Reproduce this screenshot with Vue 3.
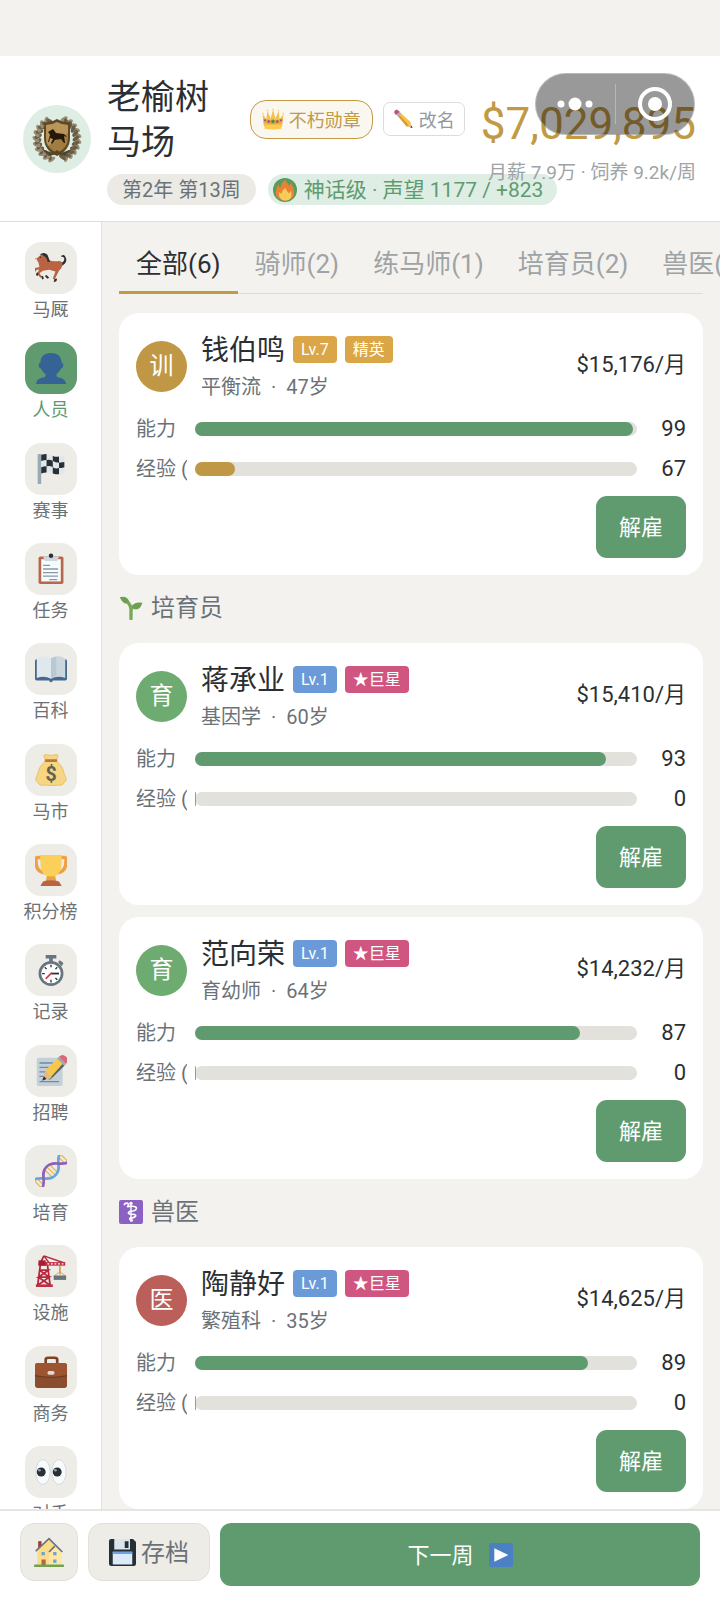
<script setup>
import { ref } from 'vue';

const menus = [
	{ name: '马厩', icon: 'horse' },
	{ name: '人员', icon: 'person' },
	{ name: '赛事', icon: 'flag' },
	{ name: '任务', icon: 'clipboard' },
	{ name: '百科', icon: 'book' },
	{ name: '马市', icon: 'money' },
	{ name: '积分榜', icon: 'trophy' },
	{ name: '记录', icon: 'watch' },
	{ name: '招聘', icon: 'memo' },
	{ name: '培育', icon: 'dna' },
	{ name: '设施', icon: 'crane' },
	{ name: '商务', icon: 'case' },
	{ name: '对手', icon: 'eyes' },
];

const tabs = ['全部(6)', '骑师(2)', '练马师(1)', '培育员(2)', '兽医(1)'];

const groups = [
	{
		staff: [
			{ name: '钱伯鸣', mark: '训', type: 'trainer', level: 7, rank: '精英', rankType: 'elite', skill: '平衡流', age: 47, pay: '$15,176', ability: 99, exp: 67, expRate: 9 },
		],
	},
	{
		title: '培育员',
		icon: 'seedling',
		staff: [
			{ name: '蒋承业', mark: '育', type: 'breeder', level: 1, rank: '★巨星', rankType: 'star', skill: '基因学', age: 60, pay: '$15,410', ability: 93, exp: 0, expRate: 0 },
			{ name: '范向荣', mark: '育', type: 'breeder', level: 1, rank: '★巨星', rankType: 'star', skill: '育幼师', age: 64, pay: '$14,232', ability: 87, exp: 0, expRate: 0 },
		],
	},
	{
		title: '兽医',
		icon: 'medical',
		staff: [
			{ name: '陶静好', mark: '医', type: 'vet', level: 1, rank: '★巨星', rankType: 'star', skill: '繁殖科', age: 35, pay: '$14,625', ability: 89, exp: 0, expRate: 0 },
		],
	},
];

const activeMenu = ref('人员');
const activeTab = ref('全部(6)');

// laurel leaves, left and right of the shield
const leaves = [];
for (let a = 20; a <= 155; a += 15) {
	leaves.push(a, 360 - a);
}
</script>

<template>
	<div class="page">
		<svg class="sprite" aria-hidden="true">
			<symbol id="crown" viewBox="0 0 36 36">
				<path d="M3 30 1 10l6 8 2-13 5 12 4-14 4 14 5-12 2 13 6-8-2 20z" fill="#f4c14d" />
				<path d="M4 29q14-4 28 0v5q-14 2-28 0z" fill="#ffcc4d" />
				<path d="M2 17q16 6 32 0l-1 8q-15 4-30 0z" fill="#e9a83f" />
				<g fill="#ffd873"><circle cx="1.500" cy="9" r="1.500" /><circle cx="9" cy="4" r="1.500" /><circle cx="18" cy="2.500" r="1.500" /><circle cx="27" cy="4" r="1.500" /><circle cx="34.500" cy="9" r="1.500" /></g>
				<circle cx="18" cy="22" r="3" fill="#5c913b" />
				<g fill="#9042b5"><circle cx="11" cy="22" r="2" /><circle cx="25" cy="22" r="2" /><circle cx="5" cy="20" r="1.500" /><circle cx="31" cy="20" r="1.500" /></g>
			</symbol>
			<symbol id="pencil" viewBox="0 0 36 36">
				<path d="M35 34 25 31l6-7z" fill="#e8b98d" /><path d="m35 34-4-1 3-3z" fill="#292f33" />
				<path d="m9 13 5-6 18 17-7 8z" fill="#f6c145" /><path d="m9 13 2-3 17 19-3 3z" fill="#d99e32" />
				<path d="m5 9 6-5 4 4-6 6z" fill="#a9b6be" /><path d="M2 6q0-4 5-5l5 4-7 6z" fill="#c74d7b" />
			</symbol>
			<symbol id="fire" viewBox="0 0 36 36">
				<circle cx="18" cy="18" r="18" fill="#579b63" />
				<path d="M18 3q3 5 7 9 0-3 2-5 5 8 5 15 0 11-14 12Q5 33 4 22 4 16 8 9q1 5 3 6 1-8 7-12z" fill="#e98333" />
				<path d="M19 15q1 5 5 8l3-4q4 14-9 15-10-1-9-13l4 3q0-5 6-9z" fill="#f8cb5c" />
			</symbol>
			<symbol id="horse" viewBox="0 0 36 36">
				<path d="M27 13q6-1 6-5 0-3-4-3 3-3 5 0 4 7-5 11z" fill="#292f33" />
				<path d="M1 8 7 3l3-1q4 2 5 7 6 2 12 1 4 0 4 5-1 4-4 6l-3 6-2 4-2-1 3-8-7-2-7 1-4 3 3 4-2 1-4-5 3-4-3 0-4 5-2-1 4-6 5-1-1-5-3-5-4 2z" fill="#b96343" />
				<path d="M5 3Q10-1 14 3l3 8-3 0q0-5-6-8z" fill="#292f33" />
				<path d="m2 23-1 3 2 1 1-3zM7 27l1 4 2-1-1-3zM11 27l3 3 2-1-3-3zM22 30l-1 4 3-1 1-3z" fill="#292f33" />
				<circle cx="6" cy="6" r=".8" fill="#292f33" />
			</symbol>
			<symbol id="person" viewBox="0 0 36 36">
				<path d="M18 1q12 0 12 12 0 8-6 12 0 4 4 4 6 1 7 7H1q1-6 7-7 4 0 4-4-6-4-6-12Q6 1 18 1z" fill="#366395" />
				<path d="M6 12q-3 0-1 6l3 1zM30 12q3 0 1 6l-3 1z" fill="#366395" />
			</symbol>
			<symbol id="flag" viewBox="0 0 36 36">
				<rect x="3" y="1" width="4" height="34" rx="1" fill="#99aab5" />
				<path d="M7 2q7-2 13 1t13 0v20q-7 3-13 0t-13 0z" fill="#dfe7ec" />
				<path d="M7 2q3-1 6-1v7q-3 0-6 1zM20 3q3 2 7 1v7q-4 0-7-2zM13 8q4-1 7 1v7q-3-2-7-1zM27 11l6-1v6q-3 1-6 1zM7 16q3-1 6-1v7q-3 0-6 1zM20 16q3 2 7 1v7q-4 0-7-1z" fill="#292f33" />
			</symbol>
			<symbol id="clipboard" viewBox="0 0 36 36">
				<rect x="4" y="4" width="28" height="31" rx="2" fill="#b8674d" /><rect x="7" y="7" width="22" height="25" fill="#f8fbfc" />
				<path d="M9 4h6q0-3 3-3t3 3h6l-2 5H11z" fill="#ccd6dd" /><circle cx="18" cy="3" r="2.500" fill="#292f33" />
				<path d="M9 14h8M9 18h17M9 22h17M9 26h17M16 30h9" stroke="#8799a7" stroke-width="1.500" />
			</symbol>
			<symbol id="book" viewBox="0 0 36 36">
				<path d="M0 9q0-2 2-2h32q2 0 2 2v20q0 2-2 2H20q0 2-2 2t-2-2H2q-2 0-2-2z" fill="#43698f" />
				<path d="M4 5q8-3 14 1v23q-7-4-16-1V7z" fill="#e1e8ed" /><path d="M18 6q7-4 14-1l2 2v21q-9-3-16 1z" fill="#ccd6dd" />
				<path d="M18 6l6-2v21l-6 4z" fill="#b9c8d6" />
			</symbol>
			<symbol id="money" viewBox="0 0 36 36">
				<path d="M12 8 10 2q0-2 4-1 4 1 8 0 4-1 4 1l-2 6q8 6 9 15 4 6 0 9-2 4-7 3-8 1-16 0-5 1-7-3-4-3 0-9 1-9 9-15z" fill="#f6d583" stroke="#e8bd5a" />
				<rect x="11" y="6" width="14" height="3" rx="1" fill="#bc7540" />
				<text x="18" y="30" text-anchor="middle" font-size="22" font-weight="700" fill="#67624f">$</text>
			</symbol>
			<symbol id="trophy" viewBox="0 0 36 36">
				<path d="M8 4H3Q1 4 1 7q0 13 9 14M28 4h5q2 0 2 3 0 13-9 14" fill="none" stroke="#eda143" stroke-width="4" />
				<path d="M14 22h8l2 9H12z" fill="#eaa343" /><path d="M6 1h24v7q0 14-7 17H13Q6 22 6 8z" fill="#fbd05a" />
				<path d="M9 31q9-3 18 0l3 5H6z" fill="#b96345" />
			</symbol>
			<symbol id="watch" viewBox="0 0 36 36">
				<path d="M12 1h12v4H12zM16 5h4v4h-4zM26 9l2-2 4 3-2 4z" fill="#66757f" />
				<circle cx="18" cy="22" r="14" fill="#66757f" /><circle cx="18" cy="22" r="11" fill="#fff" />
				<path d="M18 12v3M18 29v3M8 22h3M11 15l2 2M25 15l-2 2M25 29l-2-2" stroke="#292f33" stroke-width="1.500" />
				<path d="M18 22h9" stroke="#292f33" stroke-width="2" /><path d="m19 21-7 7" stroke="#d83b4a" stroke-width="2" />
			</symbol>
			<symbol id="memo" viewBox="0 0 36 36">
				<rect x="2" y="3" width="29" height="32" rx="2" fill="#c3d0da" />
				<path d="M5 9h18M5 14h14M5 19h11M5 24h6M5 30h22" stroke="#708ba5" stroke-width="1.500" />
				<path d="m9 27 3-10L25 4l8 8-15 15z" fill="#f6c64d" /><path d="m15 28 3-1 15-15-2-2z" fill="#55636b" />
				<path d="m8 28 4-10 7 8z" fill="#e3b88d" /><path d="m8 29 2-5 3 3z" fill="#292f33" />
				<path d="m25 4 2-2 8 8-2 2z" fill="#99aab5" /><path d="m27 2q4-4 8 0 3 3 0 8z" fill="#df6577" />
			</symbol>
			<symbol id="dna" viewBox="0 0 36 36">
				<g transform="rotate(-45 18 18)" fill="none">
					<path d="M-3 12v12M1 14v8M14 12v12M18 11v14M22 12v12M35 14v8M39 12v12" stroke="#e7ba58" stroke-width="1.500" />
					<path d="M-5 11C6 11 6 25 18 25S30 11 41 11" stroke="#68a6df" stroke-width="3" />
					<path d="M-5 25C6 25 6 11 18 11S30 25 41 25" stroke="#8d62b6" stroke-width="3" />
				</g>
			</symbol>
			<symbol id="crane" viewBox="0 0 36 36">
				<path d="M6 11 3 34M14 11l3 23M5 17h10L4 25h12L3 34M5 17l11 8M4 25l13 9M10 1 5 11" fill="none" stroke="#b6273e" stroke-width="2" />
				<path d="m10 1 23 8M10 1l6 8" stroke="#b6273e" stroke-width="1.500" /><path d="M4 8h30v4H4z" fill="#be3145" />
				<path d="M14 10h18" stroke="#fff" stroke-width="1.500" stroke-dasharray="2 2" />
				<rect x="4" y="6" width="8" height="6" fill="#a81e37" /><path d="M1 33h19v3H1z" fill="#be3145" />
				<path d="M28 12v10" fill="none" stroke="#d9a14b" stroke-width="2" /><path d="m22 23 6-4 6 4" fill="none" stroke="#d9a14b" /><rect x="21" y="23" width="14" height="5" fill="#66757f" />
			</symbol>
			<symbol id="case" viewBox="0 0 36 36">
				<path d="M12 9V4q0-2 3-2h7q3 0 3 2v5" fill="none" stroke="#7f4325" stroke-width="3" />
				<rect y="8" width="36" height="28" rx="3" fill="#8a4d2e" /><path d="M0 11q0-3 3-3h30q3 0 3 3v11q-18 4-36 0z" fill="#9c5530" />
				<path d="M0 22q18 4 36 0" fill="none" stroke="#65351f" /><rect x="14" y="17" width="8" height="4" rx="2" fill="#e3dbd3" />
			</symbol>
			<symbol id="eyes" viewBox="0 0 36 36">
				<ellipse cx="9" cy="18" rx="8" ry="14" fill="#f8fbfd" stroke="#cfd7dc" /><ellipse cx="27" cy="18" rx="8" ry="14" fill="#f8fbfd" stroke="#cfd7dc" />
				<circle cx="7" cy="18" r="5" fill="#292f33" /><circle cx="25" cy="18" r="5" fill="#292f33" />
				<circle cx="5" cy="16" r="1.500" fill="#91a3ae" /><circle cx="23" cy="16" r="1.500" fill="#91a3ae" />
			</symbol>
			<symbol id="seedling" viewBox="0 0 36 36">
				<path d="M18 34V20Q17 9 6 5M18 21q1-5 9-8" fill="none" stroke="#77a957" stroke-width="5" stroke-linecap="round" />
				<path d="M1 2Q12-1 15 8q-1 4-7 3Q4 8 1 2zM35 10q-3 11-11 10-4-1-4-4 3-8 15-6z" fill="#6da052" />
			</symbol>
			<symbol id="medical" viewBox="0 0 36 36">
				<rect width="36" height="36" rx="3" fill="#8b62c4" />
				<path d="M18 7v26" stroke="#fff" stroke-width="2" /><circle cx="18" cy="5" r="2.500" fill="#fff" />
				<path d="M8 8q0-4 5-3 3 3-1 5 15-2 14 3-1 4-10 4-4 3 0 4 10 0 9 3-2 3-8 3-3 2 4 4" fill="none" stroke="#fff" stroke-width="2.500" />
			</symbol>
			<symbol id="house" viewBox="0 0 36 36">
				<path d="M5 5h4v9H5z" fill="#9a3b3f" /><path d="M4 15 18 2l14 13v18H4z" fill="#fbdc8b" /><path d="m18 18 7-7 8 8v14H18z" fill="#ffe7a5" />
				<path d="M2 17 18 2l16 16M18 18l7-7" fill="none" stroke="#66757f" stroke-width="2" />
				<g fill="#70a3d3"><rect x="9" y="18" width="4" height="4" /><rect x="23" y="18" width="4" height="4" /><rect x="23" y="27" width="4" height="4" /></g>
				<rect x="9" y="27" width="5" height="7" fill="#b66347" /><rect y="33" width="36" height="3" rx="1" fill="#72a14f" />
			</symbol>
			<symbol id="floppy" viewBox="0 0 36 36">
				<path d="M3 0h29l4 4v29q0 3-3 3H3q-3 0-3-3V3q0-3 3-3z" fill="#252f37" />
				<path d="M7 0h21v14H7z" fill="#dbe4eb" /><rect x="21" y="3" width="5" height="9" fill="#252f37" />
				<path d="M5 17h26v17H5z" fill="#dce9f6" /><path d="M5 17h26v3H5z" fill="#6da2e3" />
			</symbol>
			<symbol id="play" viewBox="0 0 36 36">
				<rect width="36" height="36" rx="3" fill="#4b80c5" /><path d="m8 8 21 10L8 28z" fill="#fff" />
			</symbol>
		</svg>

		<header class="header">
			<div class="stable-logo">
				<svg viewBox="0 0 50 50" role="img" aria-label="马场徽章">
					<g v-for="a in leaves" :key="a" :transform="`rotate(${a + 180} 25 25)`">
						<ellipse cx="23" cy="4" rx="2" ry="4" fill="#9a8e74" transform="rotate(35 23 4)" />
						<ellipse cx="26" cy="6" rx="2" ry="4" fill="#6b5e46" transform="rotate(-35 26 6)" />
					</g>
					<path d="M25 5q6 4 13 3v16q0 12-13 18Q12 36 12 24V8q7 1 13-3z" fill="#5f4825" />
					<path d="M25 8q5 3 11 3v13q0 10-11 15Q14 34 14 24V11q6 0 11-3z" fill="#a07c40" />
					<path d="M25 8q5 3 11 3v8L16 32q-2-3-2-8V11q6 0 11-3z" fill="#d0b071" opacity=".5" />
					<path d="m16 18 5-3 3 4 8 1 3 3-3-1 1 7h-1l-3-4-6 1-3 4-1-1 2-4-3-1-1 4h-1l2-7-1-2z" fill="#251709" />
					<path d="m10 35 11 4 4-3 4 3 11-4-7 7-8-2-8 2z" fill="#54452d" />
				</svg>
			</div>
			<div class="stable-info">
				<div class="stable-row">
					<h1 class="stable-name">老榆树马场</h1>
					<button type="button" class="medal"><svg class="icon-22"><use href="#crown" /></svg>不朽勋章</button>
					<button type="button" class="rename"><svg class="icon-20"><use href="#pencil" /></svg>改名</button>
				</div>
				<div class="stable-tags">
					<span class="tag">第2年 第13周</span>
					<span class="tag tag-fame"><svg class="icon-24"><use href="#fire" /></svg>神话级 · 声望 1177 / +823</span>
				</div>
			</div>
			<div class="finance">
				<div class="money">$7,029,895</div>
				<div class="cost">月薪 7.9万 · 饲养 9.2k/周</div>
			</div>
			<div class="capsule">
				<button type="button" aria-label="更多">
					<svg width="36" height="16" viewBox="0 0 36 16" fill="#fff"><circle cx="4" cy="8" r="3.500" /><circle cx="18" cy="8" r="6.500" /><circle cx="32" cy="8" r="3.500" /></svg>
				</button>
				<i></i>
				<button type="button" aria-label="关闭">
					<svg width="36" height="36" viewBox="0 0 36 36"><circle cx="18" cy="18" r="15" fill="none" stroke="#fff" stroke-width="4" /><circle cx="18" cy="18" r="7" fill="#fff" /></svg>
				</button>
			</div>
		</header>

		<div class="body">
			<nav class="sidebar">
				<button
					v-for="menu in menus"
					:key="menu.name"
					type="button"
					class="menu"
					:class="{ active: activeMenu === menu.name }"
					@click="activeMenu = menu.name"
				>
					<span class="menu-icon"><svg class="icon-32"><use :href="'#' + menu.icon" /></svg></span>
					<span class="menu-name">{{ menu.name }}</span>
				</button>
			</nav>

			<main class="content">
				<div class="tabs">
					<button
						v-for="tab in tabs"
						:key="tab"
						type="button"
						class="tab"
						:class="{ active: activeTab === tab }"
						@click="activeTab = tab"
					>{{ tab }}</button>
				</div>

				<section v-for="(group, index) in groups" :key="index" class="group">
					<h2 v-if="group.title" class="group-title"><svg class="icon-24"><use :href="'#' + group.icon" /></svg>{{ group.title }}</h2>
					<article v-for="item in group.staff" :key="item.name" class="card">
						<div class="card-head">
							<div class="avatar" :class="item.type">{{ item.mark }}</div>
							<div class="who">
								<div class="who-row">
									<h3 class="who-name">{{ item.name }}</h3>
									<span class="badge" :class="{ elite: item.level > 5 }">Lv.{{ item.level }}</span>
									<span class="badge" :class="item.rankType">{{ item.rank }}</span>
								</div>
								<div class="who-info">
									<span>{{ item.skill }}</span>
									<span>·</span>
									<span>{{ item.age }}岁</span>
								</div>
							</div>
							<div class="pay">{{ item.pay }}/月</div>
						</div>
						<div class="stats">
							<div class="stat">
								<span class="stat-label">能力</span>
								<div class="track"><div class="fill" :style="{ width: item.ability + '%' }"></div></div>
								<span class="stat-value">{{ item.ability }}</span>
							</div>
							<div class="stat">
								<span class="stat-label">经验 (</span>
								<div class="track"><div class="fill exp" :style="{ width: item.expRate + '%' }"></div></div>
								<span class="stat-value">{{ item.exp }}</span>
							</div>
						</div>
						<button type="button" class="fire">解雇</button>
					</article>
				</section>
			</main>
		</div>

		<footer class="footer">
			<button type="button" class="tool home" aria-label="主页"><svg class="icon-30"><use href="#house" /></svg></button>
			<button type="button" class="tool save"><svg class="icon-27"><use href="#floppy" /></svg><span>存档</span></button>
			<button type="button" class="next"><span>下一周</span><svg class="icon-24"><use href="#play" /></svg></button>
		</footer>
	</div>
</template>

<style>
body {
	margin: 0;
	background: #f4f2ee;
}
</style>

<style scoped>
.page {
	display: flex;
	flex-direction: column;
	box-sizing: border-box;
	height: 100vh;
	padding-top: 56px;
	overflow: hidden;
	background: #f4f2ee;
	color: #2b2f33;
	font-family: Roboto, "Noto Sans CJK SC", sans-serif;
}

.page * {
	box-sizing: border-box;
}

.sprite {
	display: none;
}

button {
	margin: 0;
	padding: 0;
	border: 0;
	background: none;
	color: inherit;
	font: inherit;
	cursor: pointer;
}

h1,
h2,
h3 {
	margin: 0;
	font-weight: 400;
}

.icon-20,
.icon-22,
.icon-24,
.icon-27,
.icon-30,
.icon-32 {
	flex: none;
	display: block;
}

.icon-20 {
	width: 20px;
	height: 20px;
}

.icon-22 {
	width: 22px;
	height: 22px;
}

.icon-24 {
	width: 24px;
	height: 24px;
}

.icon-27 {
	width: 27px;
	height: 27px;
}

.icon-30 {
	width: 30px;
	height: 30px;
}

.icon-32 {
	width: 32px;
	height: 32px;
}

.header {
	position: relative;
	display: flex;
	align-items: center;
	gap: 16px;
	flex: none;
	padding: 17px 24px 16px 23px;
	border-bottom: 1px solid #dfdeda;
	background: #fff;
}

.stable-logo {
	display: flex;
	align-items: center;
	justify-content: center;
	flex: none;
	width: 68px;
	height: 68px;
	border-radius: 50%;
	background: #deeee5;
}

.stable-logo svg {
	width: 50px;
	height: 50px;
}

.stable-info {
	flex: 1;
	min-width: 0;
}

.stable-row {
	display: flex;
	align-items: center;
	gap: 10px;
}

.stable-name {
	flex: 1;
	padding-top: 2px;
	font-size: 34px;
	line-height: 45px;
}

.medal,
.rename {
	display: flex;
	align-items: center;
	flex: none;
	font-size: 18px;
	white-space: nowrap;
}

.medal {
	gap: 5px;
	height: 39px;
	padding: 0 11px;
	border: 1px solid #c09a45;
	border-radius: 16px;
	background: #faf7f0;
	color: #c09a45;
}

.rename {
	gap: 6px;
	height: 34px;
	padding: 0 9px;
	border: 1px solid #dddcd9;
	border-radius: 7px;
	color: #93989b;
}

.stable-tags {
	display: flex;
	gap: 12px;
	margin-top: 9px;
}

.tag {
	display: flex;
	align-items: center;
	flex: none;
	height: 31px;
	padding: 0 15px;
	border-radius: 16px;
	background: #eceae5;
	color: #6b7277;
	font-size: 20px;
	line-height: 30px;
	white-space: nowrap;
}

.tag-fame {
	gap: 7px;
	padding: 0 14px 0 5px;
	background: #deeee5;
	color: #609b6f;
	font-size: 21px;
}

.finance {
	position: relative;
	flex: none;
	text-align: right;
}

.money {
	color: #c09a45;
	font-size: 44px;
	line-height: 58px;
}

.cost {
	margin-top: 8px;
	color: #9ea3a5;
	font-size: 19px;
	line-height: 23px;
}

.capsule {
	position: absolute;
	top: 17px;
	right: 25px;
	display: flex;
	align-items: center;
	width: 160px;
	height: 62px;
	border: 1px solid rgba(255, 255, 255, 0.3);
	border-radius: 31px;
	background: rgba(0, 0, 0, 0.4);
}

.capsule button {
	display: flex;
	align-items: center;
	justify-content: center;
	flex: 1;
	height: 100%;
}

.capsule i {
	width: 1px;
	height: 40px;
	background: rgba(255, 255, 255, 0.3);
}

.body {
	display: flex;
	flex: 1;
	min-height: 0;
}

.sidebar {
	display: flex;
	flex-direction: column;
	flex: none;
	width: 102px;
	padding-top: 20px;
	overflow-y: auto;
	scrollbar-width: none;
	border-right: 1px solid #e4e2dd;
	background: #fff;
}

.menu {
	display: flex;
	flex-direction: column;
	align-items: center;
	justify-content: flex-start;
	gap: 4px;
	flex: 0 0 7.92%;
	color: #6b7277;
	font-size: 18px;
	line-height: 24px;
}

.menu-icon {
	display: flex;
	align-items: center;
	justify-content: center;
	width: 52px;
	height: 52px;
	border-radius: 16px;
	background: #edece7;
}

.menu.active {
	color: #609b6f;
}

.menu.active .menu-icon {
	background: #609b6f;
}

.content {
	flex: 1;
	min-width: 0;
	padding: 0 17px;
	overflow: auto;
	scrollbar-width: none;
}

.tabs {
	display: flex;
	height: 72px;
	margin-bottom: 19px;
	border-bottom: 1px solid #dddcd8;
}

.tab {
	flex: none;
	height: 72px;
	padding: 10px 17px 0;
	border-bottom: 3px solid transparent;
	color: #9ea3a5;
	font-size: 26px;
	white-space: nowrap;
}

.tab.active {
	border-color: #c09a45;
	color: #2b2f33;
}

.group-title {
	display: flex;
	align-items: center;
	gap: 8px;
	height: 68px;
	padding-bottom: 2px;
	color: #6b7277;
	font-size: 24px;
	line-height: 32px;
}

.card {
	display: flex;
	flex-direction: column;
	padding: 17px;
	border-radius: 20px;
	background: #fff;
}

.card + .card {
	margin-top: 12px;
}

.card-head {
	display: flex;
	align-items: center;
	gap: 14px;
}

.avatar {
	flex: none;
	width: 51px;
	height: 51px;
	margin-bottom: 2px;
	border-radius: 50%;
	color: #fff;
	font-size: 24px;
	line-height: 51px;
	text-align: center;
}

.avatar.trainer {
	background: #c09845;
}

.avatar.breeder {
	background: #6eab70;
}

.avatar.vet {
	background: #bb5f5b;
}

.who {
	flex: 1;
	min-width: 0;
}

.who-row {
	display: flex;
	align-items: center;
	gap: 8px;
	height: 38px;
}

.who-name {
	padding-top: 4px;
	font-size: 28px;
	line-height: 34px;
}

.badge {
	height: 27px;
	padding: 0 8px;
	border-radius: 4px;
	background: #6a9bd8;
	color: #fff;
	font-size: 16px;
	line-height: 27px;
}

.badge.elite {
	background: #dba648;
}

.badge.star {
	background: #cf5680;
}

.who-info {
	display: flex;
	gap: 10px;
	padding-top: 2px;
	color: #6b7277;
	font-size: 20px;
	line-height: 34px;
}

.pay {
	padding-bottom: 4px;
	font-size: 22px;
	line-height: 32px;
}

.stats {
	display: flex;
	flex-direction: column;
	gap: 10px;
	margin: 10px 0 12px;
}

.stat {
	display: flex;
	align-items: center;
	gap: 8px;
	height: 30px;
}

.stat-label {
	flex: none;
	width: 51px;
	overflow: hidden;
	color: #6b7277;
	font-size: 20px;
	line-height: 30px;
	white-space: nowrap;
}

.track {
	flex: 1;
	height: 14px;
	border-radius: 7px;
	background: #e2e1dc;
}

.fill {
	min-width: 1px;
	height: 100%;
	border-radius: 7px;
	background: #609b6f;
}

.fill.exp {
	background: #c09845;
}

.stat-value {
	width: 41px;
	font-size: 22px;
	line-height: 30px;
	text-align: right;
}

.fire {
	align-self: flex-end;
	height: 62px;
	padding: 0 23px 4px;
	border-radius: 11px;
	background: #609b6f;
	color: #fff;
	font-size: 22px;
}

.footer {
	display: flex;
	align-items: flex-start;
	gap: 10px;
	flex: none;
	padding: 12px 20px 14px;
	border-top: 2px solid #e6e5e3;
	background: #fff;
}

.tool {
	display: flex;
	align-items: center;
	justify-content: center;
	height: 58px;
	border: 1px solid #e2e0db;
	border-radius: 14px;
	background: #edece7;
	color: #6b7277;
	font-size: 24px;
}

.home {
	width: 58px;
}

.save {
	gap: 5px;
	padding: 0 20px;
}

.save span,
.next span {
	padding-bottom: 4px;
}

.next {
	display: flex;
	align-items: center;
	justify-content: center;
	gap: 15px;
	flex: 1;
	height: 63px;
	border-radius: 11px;
	background: #609b6f;
	color: #fff;
	font-size: 22px;
}
</style>
